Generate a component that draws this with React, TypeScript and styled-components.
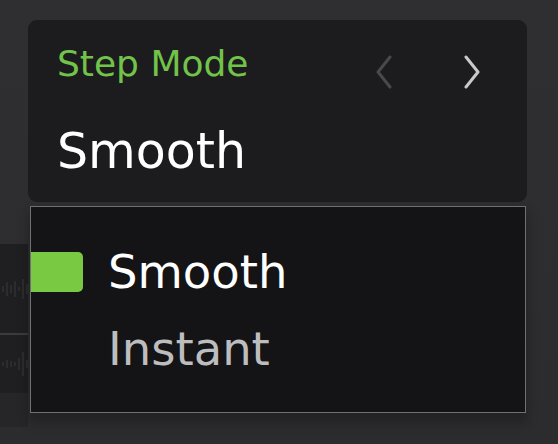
import styled, { createGlobalStyle } from 'styled-components'

const GlobalStyle = createGlobalStyle`
  html, body {
    margin: 0;
    padding: 0;
    background: #2d2d2f;
  }

  body {
    font-family: 'DejaVu Sans', 'Liberation Sans', sans-serif;
    -webkit-font-smoothing: antialiased;
  }
`

const Page = styled.div`
  display: flex;
  width: 558px;
  height: 444px;
  overflow: hidden;
  background: linear-gradient(180deg, #2f2f31 0%, #2c2c2e 100%);
`

const TrackStrip = styled.div`
  display: flex;
  flex-direction: column;
  width: 28px;
  flex-shrink: 0;
  padding-top: 244px;
`

const Lane = styled.div<{ $height: number }>`
  height: ${(p) => p.$height}px;
  background: #1f1f21;
  display: flex;
  align-items: center;
`

const LaneDivider = styled.div`
  height: 2px;
  background: #3b3b3d;
`

const LaneFoot = styled.div`
  height: 34px;
  background: #262628;
`

const Popover = styled.div`
  display: flex;
  flex-direction: column;
  gap: 4px;
  width: 499px;
  padding-top: 20px;
`

const Card = styled.div`
  box-sizing: border-box;
  height: 182px;
  padding: 24px 35px 0 29px;
  background: #1c1c1e;
  border-radius: 9px;
`

const HeaderRow = styled.div`
  display: flex;
  align-items: flex-start;
  justify-content: space-between;
`

const Label = styled.div`
  font-size: 36px;
  line-height: 40px;
  color: #72c34a;
`

const NavGroup = styled.div`
  display: flex;
  gap: 48px;
  margin-top: 12px;
`

const NavButton = styled.button<{ $enabled: boolean }>`
  display: flex;
  align-items: center;
  justify-content: center;
  width: 40px;
  height: 32px;
  padding: 0;
  border: none;
  background: none;
  color: ${(p) => (p.$enabled ? '#c9c9cb' : '#49494b')};
  cursor: ${(p) => (p.$enabled ? 'pointer' : 'default')};
`

const Value = styled.div`
  margin-top: 36px;
  font-size: 49px;
  line-height: 56px;
  color: #ffffff;
`

const Menu = styled.div`
  box-sizing: border-box;
  height: 207px;
  margin-left: 2px;
  width: 496px;
  padding-top: 37px;
  display: flex;
  flex-direction: column;
  gap: 21px;
  background: #141416;
  border: 1px solid #707072;
  box-shadow: 0 8px 10px 2px rgba(0, 0, 0, 0.22);
`

const Option = styled.div<{ $selected: boolean }>`
  display: flex;
  align-items: center;
  gap: 25px;
  height: 56px;
  font-size: 46.5px;
  line-height: 56px;
  color: ${(p) => (p.$selected ? '#ffffff' : '#bdbdbf')};
`

const Marker = styled.span<{ $visible: boolean }>`
  width: 52px;
  height: 40px;
  border-radius: 0 5px 5px 0;
  background: ${(p) => (p.$visible ? '#7ac943' : 'transparent')};
`

const Chevron = ({ dir }: { dir: 'left' | 'right' }) => (
  <svg width='20' height='34' viewBox='0 0 20 34' fill='none'>
    <polyline
      points={dir === 'right' ? '4,2 16,17 4,32' : '16,2 4,17 16,32'}
      stroke='currentColor'
      strokeWidth='3'
      strokeLinecap='round'
      strokeLinejoin='round'
    />
  </svg>
)

const Wave = ({ bars }: { bars: number[] }) => (
  <svg width='28' height='40' viewBox='0 0 28 40'>
    {bars.map((h, i) => (
      <line
        key={i}
        x1={3 + i * 4}
        x2={3 + i * 4}
        y1={20 - h}
        y2={20 + h}
        stroke='#323234'
        strokeWidth='1.5'
      />
    ))}
  </svg>
)

const options = ['Smooth', 'Instant']

export default function App() {
  const selected = 'Smooth'

  return (
    <>
      <GlobalStyle />
      <Page>
        <TrackStrip>
          <Lane $height={89}>
            <Wave bars={[3, 7, 4, 8, 2, 10, 5]} />
          </Lane>
          <LaneDivider />
          <Lane $height={58}>
            <Wave bars={[2, 4, 3, 2, 6, 12, 4]} />
          </Lane>
          <LaneFoot />
        </TrackStrip>

        <Popover>
          <Card>
            <HeaderRow>
              <Label>Step Mode</Label>
              <NavGroup>
                <NavButton $enabled={false} aria-label='Previous'>
                  <Chevron dir='left' />
                </NavButton>
                <NavButton $enabled aria-label='Next'>
                  <Chevron dir='right' />
                </NavButton>
              </NavGroup>
            </HeaderRow>
            <Value>{selected}</Value>
          </Card>

          <Menu>
            {options.map((o) => (
              <Option key={o} $selected={o === selected}>
                <Marker $visible={o === selected} />
                {o}
              </Option>
            ))}
          </Menu>
        </Popover>
      </Page>
    </>
  )
}
